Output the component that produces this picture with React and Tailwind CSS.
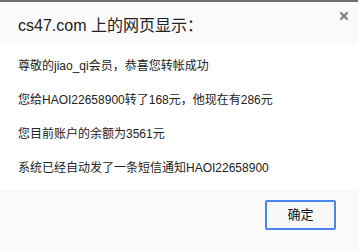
import React from 'react';

const lines = [
  '尊敬的jiao_qi会员，恭喜您转帐成功',
  '您给HAOI22658900转了168元，他现在有286元',
  '您目前账户的余额为3561元',
  '系统已经自动发了一条短信通知HAOI22658900',
];

export default function App() {
  return (
    <div
      className="w-[358px] h-[251px] flex flex-col bg-white border-t-2 border-[#6e6e6e] overflow-hidden"
      style={{ fontFamily: '"Liberation Sans", Arial, "Noto Sans CJK SC", sans-serif' }}
    >
      {/* header */}
      <div className="h-[42px] bg-[#fafafa] flex items-start justify-between pl-[18px] pr-[10px]">
        <h1 className="mt-[14px] text-[16px] leading-[20px] text-[#222]">cs47.com 上的网页显示：</h1>
        <button className="mt-[10px] w-[8px] h-[8px] p-0 flex items-center justify-center">
          <svg width="8" height="8" viewBox="0 0 8 8">
            <path d="M1 1 L7 7 M7 1 L1 7" stroke="#7a7a7a" strokeWidth="2" strokeLinecap="square" />
          </svg>
        </button>
      </div>

      {/* message */}
      <div className="h-[146px] flex flex-col gap-[18px] pt-[14px] pl-[18px] text-[12px] leading-[16px] text-[#222]">
        {lines.map((t) => (
          <p key={t}>{t}</p>
        ))}
      </div>

      {/* footer */}
      <div className="flex-1 bg-[#fafafa] flex justify-end items-start pt-[10px] pr-[22px]">
        <button className="w-[71px] h-[30px] rounded-[2px] border-2 border-[#4a86e8] bg-[#f8f8f8] text-[13px] text-[#111]">
          确定
        </button>
      </div>
    </div>
  );
}
